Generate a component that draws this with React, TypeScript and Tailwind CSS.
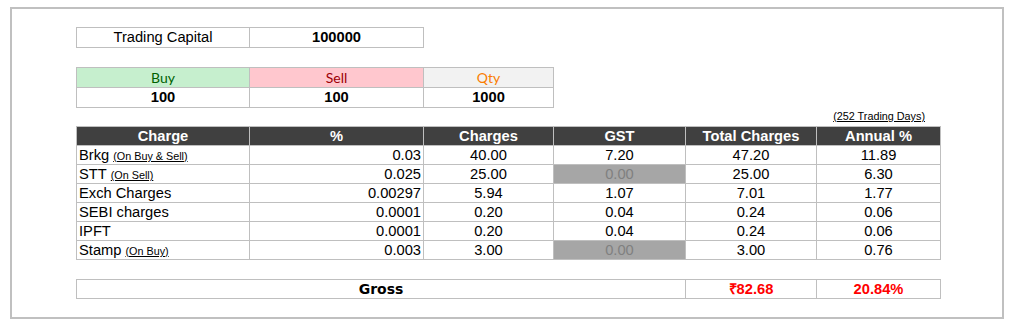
const rows = [
  { name: 'Brkg', note: '(On Buy & Sell)', pct: '0.03', charges: '40.00', gst: '7.20', total: '47.20', annual: '11.89' },
  { name: 'STT', note: '(On Sell)', pct: '0.025', charges: '25.00', gst: '0.00', total: '25.00', annual: '6.30', noGst: true },
  { name: 'Exch Charges', pct: '0.00297', charges: '5.94', gst: '1.07', total: '7.01', annual: '1.77' },
  { name: 'SEBI charges', pct: '0.0001', charges: '0.20', gst: '0.04', total: '0.24', annual: '0.06' },
  { name: 'IPFT', pct: '0.0001', charges: '0.20', gst: '0.04', total: '0.24', annual: '0.06' },
  { name: 'Stamp', note: '(On Buy)', pct: '0.003', charges: '3.00', gst: '0.00', total: '3.00', annual: '0.76', noGst: true },
]

const cell = 'border-r border-b border-[#bfbfbf] flex items-center'

export default function App() {
  return (
    <div className="bg-white w-[1015px] h-[325px] pt-[7px] font-['Liberation_Sans',Arial,sans-serif] text-[14.7px] text-black">
      <div className="ml-[10px] w-[994px] h-[312px] border-2 border-[#c0c0c0] pl-[64px] pt-[18px]">
        {/* Trading capital */}
        <div className="flex w-fit border-l border-t border-[#bfbfbf] h-[21px]">
          <div className={`${cell} w-[173px] justify-center`}>Trading Capital</div>
          <div className={`${cell} w-[174px] justify-center font-bold`}>100000</div>
        </div>

        {/* Buy / Sell / Qty */}
        <div className="mt-[19px] w-fit border-l border-t border-[#bfbfbf]">
          <div className="flex h-[20px] font-['Lato',sans-serif] text-[14px]">
            <div className={`${cell} w-[173px] justify-center bg-[#c6efce] text-[#006100]`}>Buy</div>
            <div className={`${cell} w-[174px] justify-center bg-[#ffc7ce] text-[#9c0006]`}>Sell</div>
            <div className={`${cell} w-[130px] justify-center bg-[#f2f2f2] text-[#fa7d00]`}>Qty</div>
          </div>
          <div className="flex h-[20px] font-bold">
            <div className={`${cell} w-[173px] justify-center`}>100</div>
            <div className={`${cell} w-[174px] justify-center`}>100</div>
            <div className={`${cell} w-[130px] justify-center`}>1000</div>
          </div>
        </div>

        <div className="w-[849px] h-[18px] flex items-end justify-end pb-[4px]">
          <span className="text-[10.8px] leading-[11px] underline">(252 Trading Days)</span>
        </div>

        {/* Charges table */}
        <div className="w-fit border-l border-t border-[#bfbfbf]">
          <div className="flex h-[19px] bg-[#404040] text-white font-bold">
            <div className={`${cell} w-[173px] justify-center`}>Charge</div>
            <div className={`${cell} w-[174px] justify-center`}>%</div>
            <div className={`${cell} w-[130px] justify-center`}>Charges</div>
            <div className={`${cell} w-[132px] justify-center`}>GST</div>
            <div className={`${cell} w-[131px] justify-center`}>Total Charges</div>
            <div className={`${cell} w-[124px] justify-center`}>Annual %</div>
          </div>
          {rows.map((r) => (
            <div key={r.name} className="flex h-[19px]">
              <div className={`${cell} w-[173px] pl-[2px] gap-[4px]`}>
                <span>{r.name}</span>
                {r.note && <span className="text-[10.8px] underline pt-[2px]">{r.note}</span>}
              </div>
              <div className={`${cell} w-[174px] justify-end pr-[2px]`}>{r.pct}</div>
              <div className={`${cell} w-[130px] justify-center`}>{r.charges}</div>
              <div
                className={`${cell} w-[132px] justify-center ${r.noGst ? 'bg-[#a6a6a6] text-[#808080]' : ''}`}
              >
                {r.gst}
              </div>
              <div className={`${cell} w-[131px] justify-center`}>{r.total}</div>
              <div className={`${cell} w-[124px] justify-center`}>{r.annual}</div>
            </div>
          ))}
        </div>

        {/* Gross */}
        <div className="mt-[19px] flex w-fit h-[20px] border-l border-t border-[#bfbfbf]">
          <div className={`${cell} w-[609px] justify-center font-['DejaVu_Sans',sans-serif] font-bold text-[14px]`}>
            Gross
          </div>
          <div className={`${cell} w-[131px] justify-center font-bold text-[#ff0000]`}>₹82.68</div>
          <div className={`${cell} w-[124px] justify-center font-bold text-[#ff0000]`}>20.84%</div>
        </div>
      </div>
    </div>
  )
}
